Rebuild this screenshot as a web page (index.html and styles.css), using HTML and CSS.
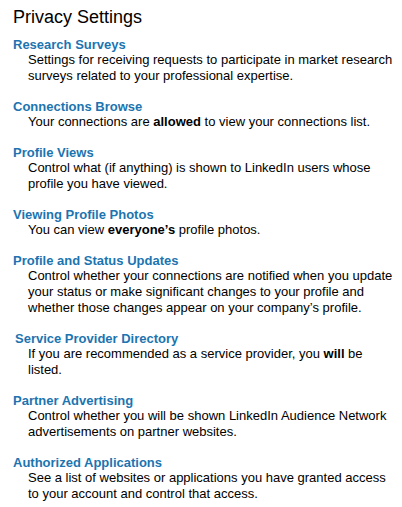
FILE: index.html
```html
<!DOCTYPE html>
<html lang="en">

<head>
    <meta charset="UTF-8">
    <meta name="viewport" content="width=device-width, initial-scale=1.0">
    <title>Privacy Settings</title>
    <link rel="stylesheet" href="styles.css">
</head>

<body>
    <div class="privacy">
        <h1 class="privacy-title">Privacy Settings</h1>

        <ul class="settings">
            <li class="setting">
                <a class="setting-name" href="#">Research Surveys</a>
                <p class="setting-desc">Settings for receiving requests to participate in market research surveys related to your professional expertise.</p>
            </li>
            <li class="setting">
                <a class="setting-name" href="#">Connections Browse</a>
                <p class="setting-desc">Your connections are <strong>allowed</strong> to view your connections list.</p>
            </li>
            <li class="setting">
                <a class="setting-name" href="#">Profile Views</a>
                <p class="setting-desc">Control what (if anything) is shown to LinkedIn users whose profile you have viewed.</p>
            </li>
            <li class="setting">
                <a class="setting-name" href="#">Viewing Profile Photos</a>
                <p class="setting-desc">You can view <strong>everyone’s</strong> profile photos.</p>
            </li>
            <li class="setting">
                <a class="setting-name" href="#">Profile and Status Updates</a>
                <p class="setting-desc">Control whether your connections are notified when you update your status or make significant changes to your profile and whether those changes appear on your company’s profile.</p>
            </li>
            <li class="setting setting-shifted">
                <a class="setting-name" href="#">Service Provider Directory</a>
                <p class="setting-desc">If you are recommended as a service provider, you <strong>will</strong> be listed.</p>
            </li>
            <li class="setting">
                <a class="setting-name" href="#">Partner Advertising</a>
                <p class="setting-desc">Control whether you will be shown LinkedIn Audience Network advertisements on partner websites.</p>
            </li>
            <li class="setting">
                <a class="setting-name" href="#">Authorized Applications</a>
                <p class="setting-desc">See a list of websites or applications you have granted access to your account and control that access.</p>
            </li>
        </ul>
    </div>
</body>

</html>
```

FILE: styles.css
```css
* {
    margin: 0;
    padding: 0;
}

body {
    background: #fff;
    color: #000;
    font-family: "Liberation Sans", Arial, sans-serif;
    font-size: 13px;
}

.privacy {
    padding: 7px 6px 0 13px;
}

.privacy-title {
    font-size: 18px;
    font-weight: normal;
    line-height: 21px;
    margin-bottom: 9px;
}

.settings {
    list-style: none;
}

.setting {
    margin-bottom: 15px;
}

.setting-shifted .setting-name {
    margin-left: 2px;
}

.setting-name {
    display: block;
    color: #1c74b0;
    font-weight: bold;
    line-height: 15px;
    text-decoration: none;
}

.setting-desc {
    margin-left: 15px;
    line-height: 16px;
}

.setting-desc strong {
    font-weight: bold;
}
```
